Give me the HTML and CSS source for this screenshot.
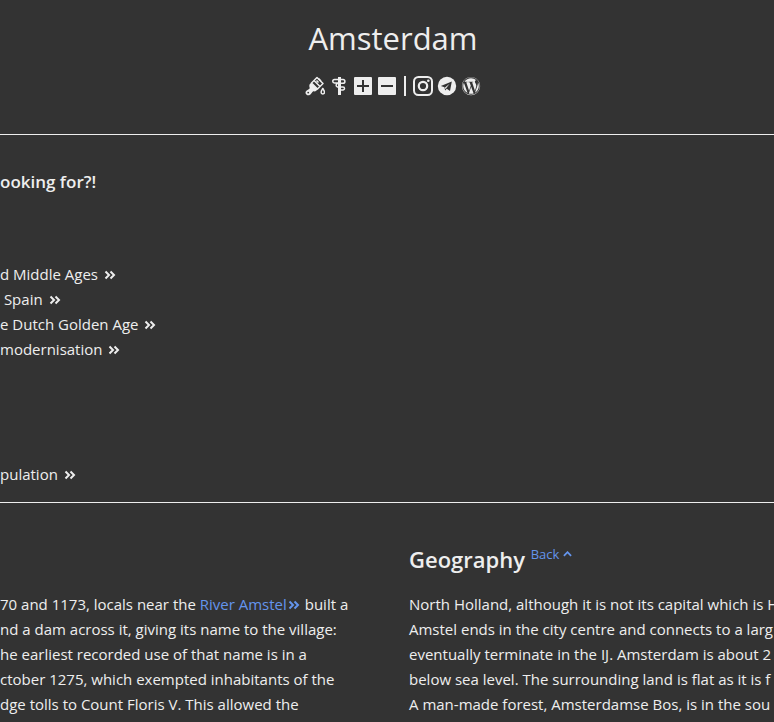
FILE: index.html
```html
<!DOCTYPE html>
<html lang="en">
<head>
<meta charset="utf-8">
<title>Amsterdam</title>
<meta name="viewport" content="width=device-width, initial-scale=1">
<link rel="stylesheet" href="styles.css">
</head>
<body>
<svg class="sprite" aria-hidden="true">
  <symbol id="more" viewBox="0 0 12 10"><path d="M1.500 1.500l3.500 3.500-3.500 3.500M6.500 1.500l3.500 3.500-3.500 3.500" fill="none" stroke="currentColor" stroke-width="2"/></symbol>
</svg>
<header class="top">
  <h1>Amsterdam</h1>
  <div class="tools">
    <button type="button" aria-label="Change colours">
      <svg viewBox="0 0 20 20"><g fill="none" stroke="currentColor" stroke-width="1.500" stroke-linejoin="round"><path d="M12 1.500l6 6-5.500 5.500-6-6z"/><path d="M9 4.500l6 6M11.500 4.500l2 2M13.500 2.500l2.500 2.500"/><path d="M17.800 12.500c-1 1.700-1.700 2.600-1.700 3.700a1.700 1.700 0 0 0 3.400 0c0-1.100-.7-2-1.700-3.700z"/></g><path d="M6.200 6.800l6.500 6.500-1.700 1.700c-1 .8-2 .3-2.700.3-1.200.5-2.200 3.600-4.100 4C1.500 19.700-.2 17.400.8 15.500c.8-1.400 3.600-2.200 3.900-3.200.2-.7-.8-1.500-.2-3.700z" fill="currentColor"/><circle cx="3.200" cy="16.600" r=".9" fill="#333"/></svg>
    </button>
    <button type="button" aria-label="Change font">
      <svg viewBox="0 0 20 20"><path d="M9 1h3v18H9z" fill="currentColor"/><path d="M10 3.500H5.500a1.700 1.700 0 0 0 0 3.500H10M11 3.500h3a1.900 1.900 0 0 1 0 3.800h-3M10 7.500H8.500a1.800 1.800 0 0 0 0 3.500h5.500a1.500 1.500 0 0 1 0 3h-3" fill="none" stroke="currentColor" stroke-width="1.500"/></svg>
    </button>
    <button type="button" aria-label="Larger text">
      <svg viewBox="0 0 20 20"><rect x="1" y="1" width="18" height="18" rx="1" fill="currentColor"/><path d="M10 4v12M4 10h12" stroke="#333" stroke-width="2"/></svg>
    </button>
    <button type="button" aria-label="Smaller text">
      <svg viewBox="0 0 20 20"><rect x="1" y="1" width="18" height="18" rx="1" fill="currentColor"/><path d="M4 10h12" stroke="#333" stroke-width="2"/></svg>
    </button>
    <span class="divider"></span>
    <a href="#instagram" aria-label="Instagram">
      <svg viewBox="0 0 20 20"><rect x="1" y="1" width="18" height="18" rx="4.500" fill="none" stroke="currentColor" stroke-width="2"/><circle cx="10" cy="10" r="4.200" fill="none" stroke="currentColor" stroke-width="2.200"/><circle cx="15.300" cy="4.700" r="1.300" fill="currentColor"/></svg>
    </a>
    <a href="#telegram" aria-label="Telegram">
      <svg viewBox="0 0 20 20"><circle cx="10" cy="10" r="9.200" fill="currentColor"/><path d="M3.800 10L14.800 5.500 13 15l-3.200-2.200-1.700 1.700-.6-3.200z" fill="#333"/><path d="M8 11.600l4.600-3.800-3.400 4.500-.8 1z" fill="currentColor"/></svg>
    </a>
    <a href="#wordpress" aria-label="WordPress">
      <svg viewBox="0 0 512 512"><g transform="translate(16 16) scale(.94)"><path fill="currentColor" d="M61.700 169.400l101.500 278C92.200 413 43.300 340.200 43.300 256c0-30.900 6.600-60.100 18.400-86.600zm337.900 75.900c0-26.300-9.400-44.500-17.500-58.700-10.800-17.500-20.900-32.400-20.900-49.900 0-19.600 14.800-37.800 35.700-37.800.9 0 1.800.1 2.800.2-37.900-34.700-88.300-55.900-143.700-55.900-74.300 0-139.700 38.100-177.800 95.900 5 .2 9.700.3 13.700.3 22.200 0 56.700-2.700 56.700-2.700 11.500-.7 12.800 16.200 1.400 17.500 0 0-11.500 1.300-24.300 2l77.500 230.400L249.800 247l-33.100-90.800c-11.500-.7-22.300-2-22.300-2-11.500-.7-10.100-18.200 1.300-17.500 0 0 35.100 2.700 56 2.700 22.200 0 56.700-2.700 56.700-2.700 11.500-.7 12.800 16.200 1.400 17.500 0 0-11.500 1.300-24.300 2l76.900 228.700 21.200-70.900c9-29.400 16-50.500 16-68.700zm-139.900 29.300l-63.800 185.500c19.100 5.600 39.200 8.700 60.100 8.700 24.800 0 48.500-4.300 70.600-12.100-.6-.9-1.100-1.900-1.500-2.900l-65.400-179.200zm183-120.700c.9 6.800 1.400 14 1.400 21.900 0 21.600-4 45.800-16.200 76.200l-65 187.900C426.200 403 468.700 334.500 468.700 256c0-37-9.400-71.800-26-102.100zM504 256c0 136.800-111.300 248-248 248C119.200 504 8 392.700 8 256 8 119.200 119.200 8 256 8c136.700 0 248 111.200 248 248zm-11.400 0c0-130.500-106.200-236.600-236.600-236.600C125.500 19.400 19.400 125.500 19.400 256S125.600 492.600 256 492.600c130.500 0 236.600-106.100 236.600-236.600z"/></g></svg>
    </a>
  </div>
</header>
<nav class="contents">
  <h3>ooking for?!</h3>
  <ul>
    <li><a href="#ages">d Middle Ages <svg class="more"><use href="#more"/></svg></a></li>
    <li><a href="#spain">&nbsp;Spain <svg class="more"><use href="#more"/></svg></a></li>
    <li><a href="#golden">e Dutch Golden Age <svg class="more"><use href="#more"/></svg></a></li>
    <li><a href="#modern">modernisation <svg class="more"><use href="#more"/></svg></a></li>
  </ul>
  <ul>
    <li><a href="#population">pulation <svg class="more"><use href="#more"/></svg></a></li>
  </ul>
</nav>
<main class="columns">
  <section class="history">
    <p>70 and 1173, locals near the <a href="#river">River Amstel<svg class="more tight"><use href="#more"/></svg></a> built a<br>
    nd a dam across it, giving its name to the village:<br>
    he earliest recorded use of that name is in a<br>
    ctober 1275, which exempted inhabitants of the<br>
    dge tolls to Count Floris V. This allowed the</p>
  </section>
  <section class="geography">
    <h2>Geography <a class="back" href="#top">Back <svg class="up" viewBox="0 0 10 6"><path d="M1 5l4-4 4 4" fill="none" stroke="currentColor" stroke-width="2"/></svg></a></h2>
    <p>North Holland, although it is not its capital which is H<br>
    Amstel ends in the city centre and connects to a larg<br>
    eventually terminate in the IJ. Amsterdam is about 2<br>
    below sea level. The surrounding land is flat as it is f<br>
    A man-made forest, Amsterdamse Bos, is in the sou</p>
  </section>
</main>
</body>
</html>
```
FILE: styles.css
```css
* { box-sizing: border-box; }
body {
  margin: 0;
  overflow: hidden;
  background: #333;
  color: #eee;
  font: 400 15px/25px "Open Sans", "Noto Sans", sans-serif;
}
h1, h2, h3, p, ul { margin: 0; padding: 0; }
a { color: inherit; text-decoration: none; }
.sprite { position: absolute; width: 0; height: 0; }
.top {
  padding: 17px 0 38px 12px;
  border-bottom: 1px solid #eee;
  text-align: center;
}
h1 { font-size: 31px; line-height: 42px; font-weight: 400; }
.tools {
  display: flex;
  justify-content: center;
  align-items: center;
  gap: 4px;
  margin-top: 17px;
}
.tools button, .tools a {
  width: 20px;
  height: 20px;
  padding: 0;
  border: 0;
  background: none;
  color: #eee;
}
.tools svg { display: block; width: 20px; height: 20px; }
.divider { width: 2px; height: 20px; margin: 0 3px; background: #eee; }
.contents {
  padding: 34px 0 15px;
  border-bottom: 1px solid #eee;
}
h3 { font-size: 17px; line-height: 25px; font-weight: 600; }
ul { list-style: none; }
.contents ul { margin-top: 68px; white-space: nowrap; }
.contents ul + ul { margin-top: 100px; }
.more { width: 12px; height: 10px; margin-left: 2px; }
.tight { margin: 0 1px; }
.columns {
  display: grid;
  grid-template-columns: 1fr 365px;
  gap: 32px;
  padding-top: 40px;
  white-space: nowrap;
}
.history { padding-top: 49px; }
.history a, .back { color: #6495ed; }
h2 { font-size: 22px; line-height: 33px; font-weight: 600; margin-bottom: 16px; }
.back { font-size: 13px; line-height: 13px; font-weight: 400; vertical-align: 9px; }
.up { width: 9px; height: 6px; vertical-align: 2px; }
```
